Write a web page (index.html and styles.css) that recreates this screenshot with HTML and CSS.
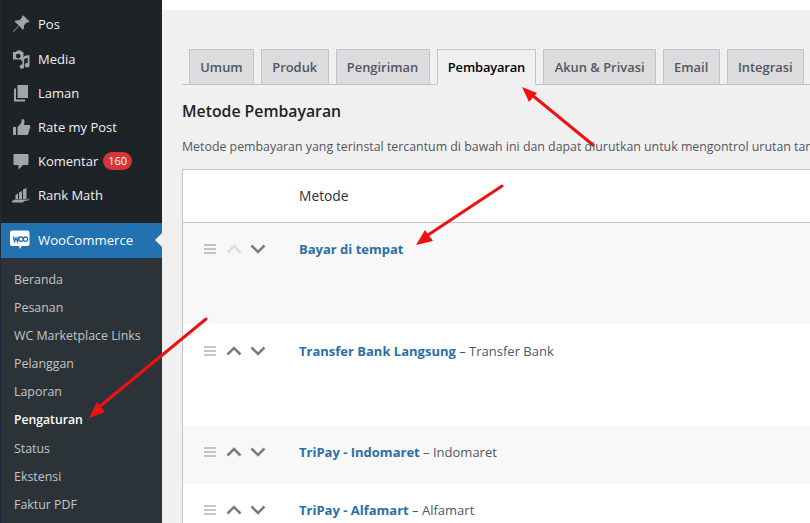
FILE: index.html
```html
<!DOCTYPE html>
<html lang="id">

<head>
    <meta charset="UTF-8" />
    <title>Pengaturan Pembayaran</title>
    <link rel="stylesheet" href="styles.css">
</head>

<body>
    <div class="page">
        <div class="sidebar">
            <ul class="menu">
                <li>
                    <svg class="menu-icon" viewBox="0 0 20 20"><path d="M12.500 1.500l6 6-1.200 1-1.300-.3-3.200 3.200c.5 1.700.2 3.300-.8 4.600L8.200 11.800 2.500 18l-.7-.6 5.900-6L3.400 7.200c1.300-1 3-1.300 4.700-.8l3.200-3.200-.3-1.300z" /></svg>
                    <span>Pos</span>
                </li>
                <li>
                    <svg class="menu-icon" viewBox="0 0 20 20"><path d="M2 3h3l1-1.500h4L11 3h1.500v7.500H2zm5.200 1.800a2.300 2.300 0 1 0 0 4.600 2.300 2.300 0 0 0 0-4.600zM18.500 6v10.200a2.300 2.300 0 1 1-1.800-2.200V9l-3.500.8v7.700a2.200 2.200 0 1 1-4.300-.5c.3-1 1.500-1.600 2.500-1.300v-4h-1.500V8H13V7z" /></svg>
                    <span>Media</span>
                </li>
                <li>
                    <svg class="menu-icon" viewBox="0 0 20 20"><path d="M6.500 2H17v13H6.500zM3 5.500h2v11h9v2H3z" /></svg>
                    <span>Laman</span>
                </li>
                <li>
                    <svg class="menu-icon" viewBox="0 0 20 20"><path d="M2 10h3v8H2zm4.500 0l3.500-3.800L11 2c1.700 0 2.700 1.200 2.500 3l-.5 3h5c1 0 1.500 1 1.200 2l-2 7c-.3.7-.8 1-1.500 1H6.500z" /></svg>
                    <span>Rate my Post</span>
                </li>
                <li>
                    <svg class="menu-icon" viewBox="0 0 20 20"><path d="M3.500 3h13c.6 0 1 .4 1 1v9c0 .6-.4 1-1 1H12l-4.500 4.500V14h-4c-.6 0-1-.4-1-1V4c0-.6.4-1 1-1z" /></svg>
                    <span>Komentar</span>
                    <b class="badge">160</b>
                </li>
                <li>
                    <svg class="menu-icon" viewBox="0 0 20 20"><path d="M8 7.500l3-1.500v8H8zm4-3l3.500-1.500v11H12zM4.500 10L7 8.500V14H4.500zM.5 16.500l3-2h13l3-1.500-2.500 2.500-4 .5-1 1.500H1.500z" /></svg>
                    <span>Rank Math</span>
                </li>
            </ul>
            <div class="woo">
                <svg class="woo-icon" viewBox="0 0 20 20"><path d="M2.500 0.500h15a2 2 0 0 1 2 2v11.500a2 2 0 0 1-2 2h-6l-1.500 3-1-3h-7a2 2 0 0 1-2-2V2.500a2 2 0 0 1 2-2z" fill="#fff" /><path d="M3.500 6.500l1 5 1.500-3.500 1.500 3.500 1-5M11 7a2.200 2.200 0 1 0 .01 0M15.500 7a2.200 2.200 0 1 0 .01 0" fill="none" stroke="#2271b1" stroke-width="1.300" /></svg>
                <span>WooCommerce</span>
                <i class="woo-caret"></i>
            </div>
            <ul class="submenu">
                <li>Beranda</li>
                <li>Pesanan</li>
                <li>WC Marketplace Links</li>
                <li>Pelanggan</li>
                <li>Laporan</li>
                <li class="current">Pengaturan</li>
                <li>Status</li>
                <li>Ekstensi</li>
                <li>Faktur PDF</li>
            </ul>
        </div>

        <div class="content">
            <div class="tabs">
                <a class="tab" href="#">Umum</a>
                <a class="tab" href="#">Produk</a>
                <a class="tab" href="#">Pengiriman</a>
                <a class="tab active" href="#">Pembayaran</a>
                <a class="tab" href="#">Akun &amp; Privasi</a>
                <a class="tab" href="#">Email</a>
                <a class="tab" href="#">Integrasi</a>
            </div>
            <h2>Metode Pembayaran</h2>
            <p class="desc">Metode pembayaran yang terinstal tercantum di bawah ini dan dapat diurutkan untuk mengontrol urutan tampilannya di halaman depan.</p>

            <div class="table">
                <div class="thead">Metode</div>

                <div class="row first alt">
                    <div class="sort">
                        <svg class="grip" viewBox="0 0 12 10"><path d="M0 1h12M0 5h12M0 9h12" /></svg>
                        <svg class="chev off" viewBox="0 0 16 10"><path d="M1.500 8.500L8 2l6.500 6.500" /></svg>
                        <svg class="chev" viewBox="0 0 16 10"><path d="M1.500 1.500L8 8l6.500-6.500" /></svg>
                    </div>
                    <div class="name"><a href="#">Bayar di tempat</a></div>
                </div>

                <div class="row tall">
                    <div class="sort">
                        <svg class="grip" viewBox="0 0 12 10"><path d="M0 1h12M0 5h12M0 9h12" /></svg>
                        <svg class="chev" viewBox="0 0 16 10"><path d="M1.500 8.500L8 2l6.500 6.500" /></svg>
                        <svg class="chev" viewBox="0 0 16 10"><path d="M1.500 1.500L8 8l6.500-6.500" /></svg>
                    </div>
                    <div class="name"><a href="#">Transfer Bank Langsung</a> – Transfer Bank</div>
                </div>

                <div class="row alt">
                    <div class="sort">
                        <svg class="grip" viewBox="0 0 12 10"><path d="M0 1h12M0 5h12M0 9h12" /></svg>
                        <svg class="chev" viewBox="0 0 16 10"><path d="M1.500 8.500L8 2l6.500 6.500" /></svg>
                        <svg class="chev" viewBox="0 0 16 10"><path d="M1.500 1.500L8 8l6.500-6.500" /></svg>
                    </div>
                    <div class="name"><a href="#">TriPay - Indomaret</a> – Indomaret</div>
                </div>

                <div class="row">
                    <div class="sort">
                        <svg class="grip" viewBox="0 0 12 10"><path d="M0 1h12M0 5h12M0 9h12" /></svg>
                        <svg class="chev" viewBox="0 0 16 10"><path d="M1.500 8.500L8 2l6.500 6.500" /></svg>
                        <svg class="chev" viewBox="0 0 16 10"><path d="M1.500 1.500L8 8l6.500-6.500" /></svg>
                    </div>
                    <div class="name"><a href="#">TriPay - Alfamart</a> – Alfamart</div>
                </div>
            </div>
        </div>
    </div>

    <!-- panah merah di atas screenshot -->
    <svg class="arrows" viewBox="0 0 810 523">
        <g class="arrow">
            <path d="M593 145L532 95" />
            <path class="head" d="M522 87L537 93 529 102z" />
            <path d="M502 186L428 235" />
            <path class="head" d="M416 245L425 230 433 241z" />
            <path d="M206 319L99 407" />
            <path class="head" d="M89 418L97 402 105 412z" />
        </g>
    </svg>
</body>

</html>
```

FILE: styles.css
```css
* {
    margin: 0;
    padding: 0;
    box-sizing: border-box;
}

ul {
    list-style: none;
}

html,
body {
    height: 100%;
    overflow: hidden;
}

body {
    position: relative;
    font-family: "Open Sans", "Noto Sans", sans-serif;
    font-size: 13px;
    color: #50575e;
    background-color: #fff;
}

.page {
    display: flex;
    height: 523px;
}

/* 
    sidebar
*/
.sidebar {
    flex: none;
    width: 162px;
    background-color: #1d2327;
    border-left: 1px solid #1b2a3a;
}

.menu {
    padding-top: 7.3px;
    height: 223px;
}

.menu li {
    display: flex;
    align-items: center;
    height: 34.2px;
    padding-left: 10px;
    color: #f0f0f1;
    font-size: 13px;
}

.menu-icon {
    flex: none;
    width: 20px;
    height: 20px;
    margin-right: 7px;
    fill: #a0a5aa;
}

.badge {
    margin-left: 5px;
    padding: 0 5px;
    height: 18px;
    line-height: 18px;
    border-radius: 9px;
    background-color: #d63638;
    color: #fff;
    font-size: 11px;
    font-weight: 400;
}

.woo {
    position: relative;
    display: flex;
    align-items: center;
    height: 35px;
    padding: 0 0 2px 9px;
    background-color: #2271b1;
    color: #fff;
    font-size: 13.200px;
}

.woo-icon {
    flex: none;
    width: 20px;
    height: 20px;
    margin-right: 8px;
}

.woo-caret {
    position: absolute;
    right: 0;
    top: 10px;
    border: 7px solid transparent;
    border-right-color: #f0f0f1;
    border-left-width: 0;
}

.submenu {
    background-color: #2c3338;
    height: 265px;
    padding-top: 8px;
}

.submenu li {
    height: 28.1px;
    line-height: 28px;
    padding-left: 13px;
    color: #c3c4c7;
    font-size: 12.400px;
}

.submenu .current {
    color: #fff;
    font-size: 12.200px;
    font-weight: 600;
}

/* 
    content
*/
.content {
    flex: 1;
    min-width: 0;
    margin-top: 10px;
    padding: 39px 0 0 20px;
    background-color: #f0f0f1;
}

.tabs {
    display: flex;
    gap: 7px;
    height: 36px;
    padding-left: 7px;
    border-bottom: 1px solid #c3c4c7;
}

.tab {
    display: block;
    height: 36px;
    line-height: 34px;
    padding: 0 10.300px;
    border: 1px solid #c3c4c7;
    background-color: #dcdcde;
    color: #50575e;
    font-size: 12.900px;
    font-weight: 600;
    text-decoration: none;
    white-space: nowrap;
}

.tab.active {
    background-color: #f0f0f1;
    border-bottom-color: #f0f0f1;
    color: #000;
    letter-spacing: -0.15px;
}

h2 {
    margin-top: 14px;
    height: 24px;
    line-height: 24px;
    font-size: 15.800px;
    font-weight: 600;
    color: #1d2327;
}

.desc {
    margin-top: 14px;
    height: 20px;
    line-height: 20px;
    white-space: nowrap;
    font-size: 12.360px;
}

.table {
    margin-top: 12px;
    background-color: #fff;
    border: 1px solid #c3c4c7;
    border-right: 0;
}

.thead {
    height: 53px;
    line-height: 52px;
    padding-left: 116px;
    border-bottom: 1px solid #c3c4c7;
    color: #2c3338;
    font-size: 13.800px;
}

.row {
    display: flex;
    align-items: flex-start;
    height: 58px;
    padding: 16px 0 0 21px;
}

.row.first {
    height: 101px;
}

.row.tall {
    height: 102px;
    padding-top: 17px;
}

.row.alt {
    background-color: #f8f8f8;
}

.sort {
    display: flex;
    align-items: center;
    flex: none;
    width: 95px;
    height: 20px;
}

.grip {
    width: 12px;
    height: 10px;
    margin-right: 10px;
    fill: none;
    stroke: #8c8f94;
    stroke-width: 1.200;
}

.chev {
    width: 16px;
    height: 10px;
    margin-right: 8px;
    fill: none;
    stroke: #787c82;
    stroke-width: 2.500;
}

.chev.off {
    stroke: #dcdcde;
}

.name {
    height: 20px;
    line-height: 20px;
    font-size: 13px;
    white-space: nowrap;
}

.name a {
    color: #2b6ea8;
    font-weight: 700;
    text-decoration: none;
}

/* 
    panah
*/
.arrows {
    position: absolute;
    left: 0;
    top: 0;
    width: 810px;
    height: 523px;
    pointer-events: none;
}

.arrow path {
    fill: none;
    stroke: #ee1111;
    stroke-width: 3;
    stroke-linecap: round;
}

.arrow .head {
    fill: #ee1111;
    stroke: none;
}
```
